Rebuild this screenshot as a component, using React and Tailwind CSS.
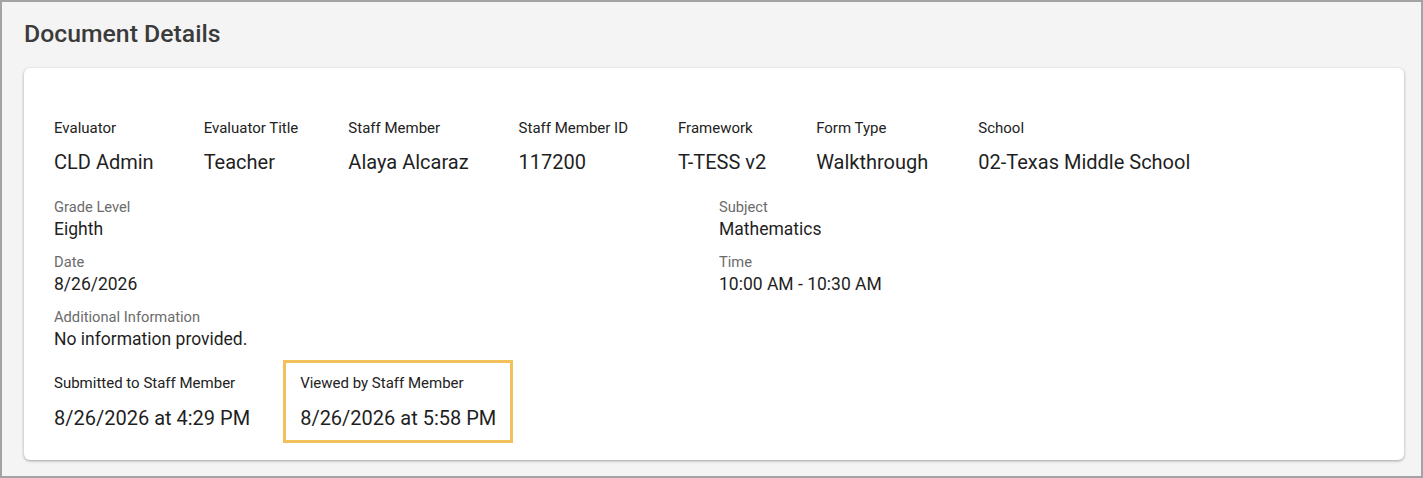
import React from 'react';

const topFields = [
  { label: 'Evaluator', value: 'CLD Admin' },
  { label: 'Evaluator Title', value: 'Teacher' },
  { label: 'Staff Member', value: 'Alaya Alcaraz' },
  { label: 'Staff Member ID', value: '117200' },
  { label: 'Framework', value: 'T-TESS v2' },
  { label: 'Form Type', value: 'Walkthrough' },
  { label: 'School', value: '02-Texas Middle School' },
];

function Detail({ label, value }) {
  return (
    <div className="flex flex-col">
      <span className="text-[14.7px] leading-[18px] text-[#6b6b6b]">{label}</span>
      <span className="text-[17.5px] leading-[22px] text-[#1f1f1f] mt-[2px]">{value}</span>
    </div>
  );
}

export default function App() {
  return (
    <div
      className="w-[1423px] h-[478px] bg-[#f4f4f4] border-2 border-[#a3a3a3] pl-[22px] pr-[17px] pt-[18px] text-[#212121]"
      style={{ fontFamily: 'Roboto, "Liberation Sans", sans-serif' }}
    >
      <h1 className="text-[24.8px] leading-[28px] font-medium text-[#3b3b3b]">Document Details</h1>

      <div className="mt-[20px] bg-white rounded-[6px] shadow-[0_1px_3px_rgba(0,0,0,0.35)] h-[392px] px-[30px] pt-[50px]">
        <div className="flex gap-[50px]">
          {topFields.map((f) => (
            <div key={f.label} className="flex flex-col">
              <span className="text-[15px] leading-[20px] text-[#222]">{f.label}</span>
              <span className="text-[20px] leading-[24px] text-[#1f1f1f] mt-[12px]">{f.value}</span>
            </div>
          ))}
        </div>

        <div className="grid grid-cols-2 gap-x-[10px] gap-y-[13px] mt-[24px]">
          <Detail label="Grade Level" value="Eighth" />
          <Detail label="Subject" value="Mathematics" />
          <Detail label="Date" value="8/26/2026" />
          <Detail label="Time" value="10:00 AM - 10:30 AM" />
          <Detail label="Additional Information" value="No information provided." />
        </div>

        <div className="flex items-start gap-[33px] mt-[10px]">
          <div className="flex flex-col pt-[13px]">
            <span className="text-[15px] leading-[20px] text-[#222]">Submitted to Staff Member</span>
            <span className="text-[20px] leading-[24px] text-[#1f1f1f] mt-[13px]">8/26/2026 at 4:29 PM</span>
          </div>
          <div className="flex flex-col border-[3px] border-[#f2c15c] px-[14px] pt-[10px] pb-[10px]">
            <span className="text-[15px] leading-[20px] text-[#222]">Viewed by Staff Member</span>
            <span className="text-[20px] leading-[24px] text-[#1f1f1f] mt-[13px]">8/26/2026 at 5:58 PM</span>
          </div>
        </div>
      </div>
    </div>
  );
}
